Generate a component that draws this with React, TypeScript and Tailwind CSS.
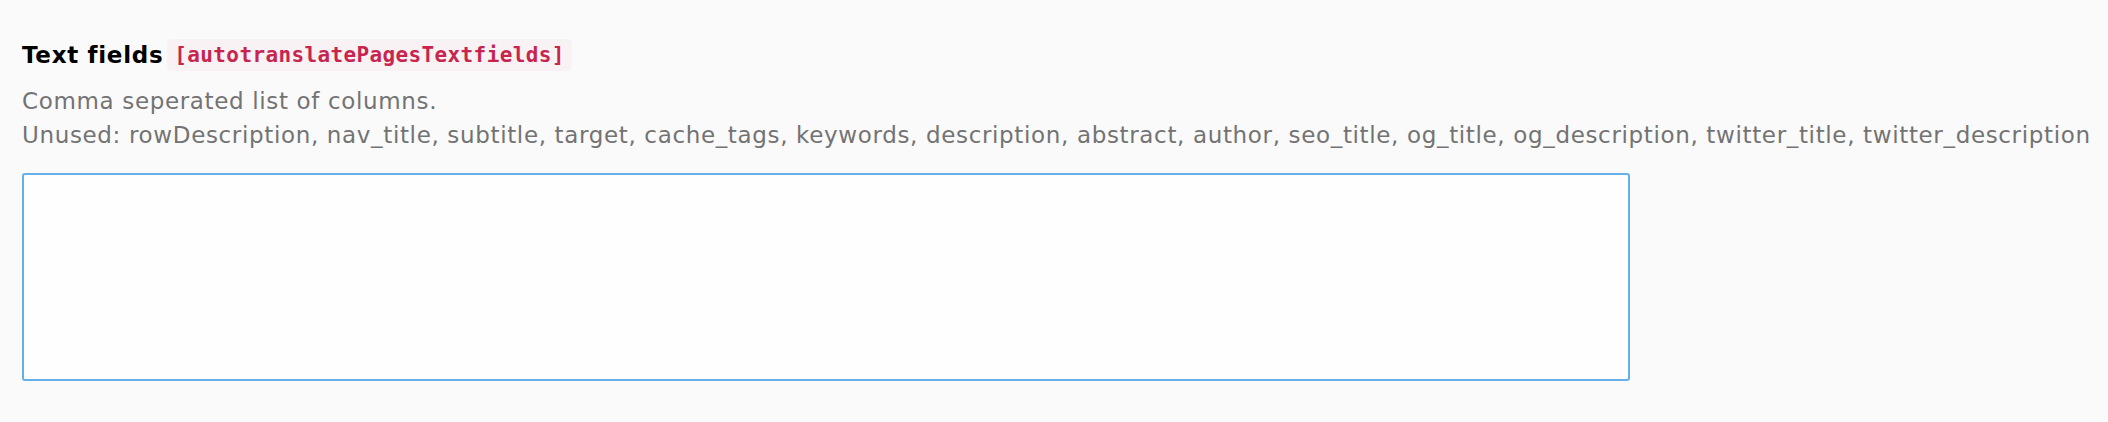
import React from "react";

const unused = [
  "rowDescription",
  "nav_title",
  "subtitle",
  "target",
  "cache_tags",
  "keywords",
  "description",
  "abstract",
  "author",
  "seo_title",
  "og_title",
  "og_description",
  "twitter_title",
  "twitter_description",
];

export default function App() {
  return (
    <div className="min-h-[422px] w-full bg-[#fafafa] px-[22px] pt-[39px] font-['DejaVu_Sans',Verdana,sans-serif]">
      <label className="flex h-[32px] items-center text-[23px] font-bold leading-[32px] tracking-[0.7px] text-black">
        <span>Text fields</span>
        <code className="ml-[4px] rounded-[5px] bg-[#f9f2f4] px-[7px] font-['DejaVu_Sans_Mono',monospace] text-[21px] leading-[32px] tracking-[0.37px] text-[#c7254e]">
          [autotranslatePagesTextfields]
        </code>
      </label>
      <div className="mt-[13px] text-[23px] leading-[34px] tracking-[0.65px] text-[#737373]">
        <p>Comma seperated list of columns.</p>
        <p className="whitespace-nowrap">Unused: {unused.join(", ")}</p>
      </div>
      <textarea className="mt-[21px] block h-[208px] w-[1608px] resize-none rounded-[3px] border-2 border-[#66afe9] bg-[#fefefe] outline-none" />
    </div>
  );
}
